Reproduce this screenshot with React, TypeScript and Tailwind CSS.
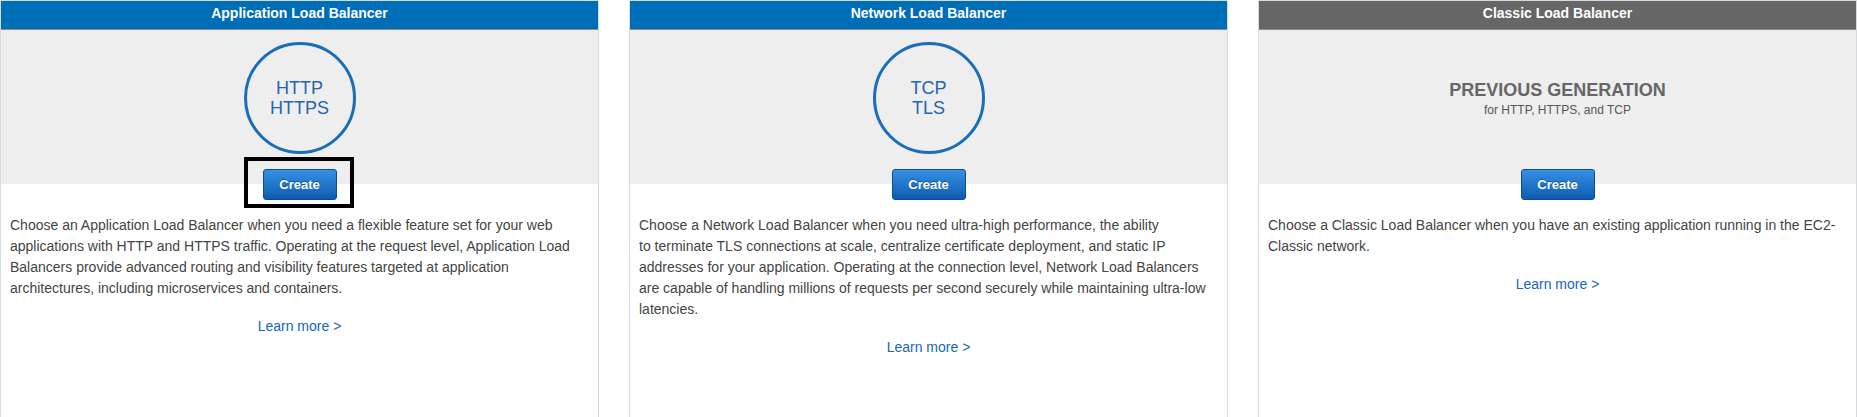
import React from "react"

type Card = {
    title: string
    legacy?: boolean
    protocols?: string[]
    highlight?: boolean
    body: React.ReactNode
}

const cards: Card[] = [
    {
        title: "Application Load Balancer",
        protocols: ["HTTP", "HTTPS"],
        highlight: true,
        body: "Choose an Application Load Balancer when you need a flexible feature set for your web applications with HTTP and HTTPS traffic. Operating at the request level, Application Load Balancers provide advanced routing and visibility features targeted at application architectures, including microservices and containers.",
    },
    {
        title: "Network Load Balancer",
        protocols: ["TCP", "TLS"],
        body: (
            <>
                Choose a Network Load Balancer when you need ultra-high performance, the ability
                <br />
                to terminate TLS connections at scale, centralize certificate deployment, and static IP addresses for your application. Operating at the connection level, Network Load Balancers are capable of handling millions of requests per second securely while maintaining ultra-low latencies.
            </>
        ),
    },
    {
        title: "Classic Load Balancer",
        legacy: true,
        body: "Choose a Classic Load Balancer when you have an existing application running in the EC2-Classic network.",
    },
]

function CreateButton({ highlight }: { highlight?: boolean }) {
    return (
        <div className="relative -mt-[15px] flex justify-center">
            <div className="relative">
                <button className="h-[31px] w-[74px] rounded-[3px] border border-[#0b4d8e] bg-gradient-to-b from-[#3591e6] to-[#0b5cb0] text-[13px] font-bold text-white [text-shadow:0_-1px_0_rgba(0,0,0,0.35)]">
                    Create
                </button>
                {highlight && (
                    <div className="pointer-events-none absolute -left-[19px] -right-[17px] -top-[12px] -bottom-[8px] border-[4px] border-black"></div>
                )}
            </div>
        </div>
    )
}

function BalancerCard({ card }: { card: Card }) {
    return (
        <div className="flex h-[440px] flex-col border border-[#d6d9dd] bg-white">
            <div className={`h-[29px] border-b border-[#8a8a8a] text-center text-[14px] font-bold leading-[24px] text-white ${card.legacy ? "bg-[#666666]" : "bg-[#006db7]"}`}>
                {card.title}
            </div>
            <div className="flex h-[154px] flex-col items-center bg-[#eeeeee] pt-[12px]">
                {card.legacy ? (
                    <div className="mt-[37px] flex flex-col items-center">
                        <div className="text-[18px] font-bold leading-[22px] text-[#666666]">PREVIOUS GENERATION</div>
                        <div className="text-[12px] leading-[18px] text-[#555555]">for HTTP, HTTPS, and TCP</div>
                    </div>
                ) : (
                    <div className="flex h-[112px] w-[112px] flex-col items-center justify-center rounded-full border-[3px] border-[#1a6db8] text-[18px] leading-[20px] text-[#2266b0]">
                        {card.protocols?.map((p) => (
                            <span key={p}>{p}</span>
                        ))}
                    </div>
                )}
            </div>
            <CreateButton highlight={card.highlight} />
            <div className="px-[9px] pt-[15px] text-[14px] leading-[21px] text-[#444444]">
                <p>{card.body}</p>
                <div className="mt-[17px] text-center">
                    <a className="text-[#1866b4]">Learn more &gt;</a>
                </div>
            </div>
        </div>
    )
}

export default function App() {
    return (
        <div className="h-[417px] overflow-hidden bg-white font-['Liberation_Sans',Arial,sans-serif]">
            <div className="grid grid-cols-3 gap-[30px]">
                {cards.map((c) => (
                    <BalancerCard key={c.title} card={c} />
                ))}
            </div>
        </div>
    )
}
